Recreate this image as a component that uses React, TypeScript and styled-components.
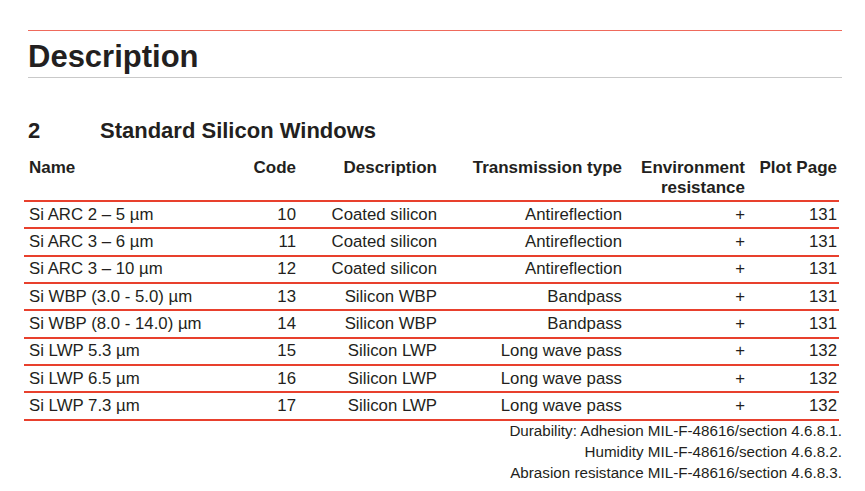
import React from "react";
import styled, { createGlobalStyle } from "styled-components";

const Global = createGlobalStyle`
  html, body { margin: 0; padding: 0; background: #ffffff; }
  body { font-family: "Liberation Sans", Arial, sans-serif; color: #231f20; }
`;

const Page = styled.div`
  width: 865px;
  height: 491px;
  padding: 30px 23px 0 28px;
  box-sizing: border-box;
  display: flex;
  flex-direction: column;
`;

const TitleBar = styled.header`
  border-top: 1px solid #ef6a5c;
  border-bottom: 1px solid #c9c9c9;
  height: 48px;
  box-sizing: border-box;
  display: flex;
  align-items: center;
`;

const Title = styled.h1`
  margin: 0;
  font-size: 31px;
  font-weight: 700;
  line-height: 1;
  position: relative;
  top: 2px;
`;

const Section = styled.h2`
  margin: 41px 0 0 0;
  font-size: 22px;
  font-weight: 700;
  line-height: 24px;
  display: flex;
`;

const SectionNum = styled.span`
  width: 72px;
`;

const Table = styled.div`
  margin: 15px 0 0 -4px;
  width: 815px;
  display: flex;
  flex-direction: column;
`;

const cols = "176px 91px 141px 185px 123px 92px";

const HeadRow = styled.div`
  display: grid;
  grid-template-columns: ${cols};
  padding: 0 0 3px 5px;
  border-bottom: 2px solid #e8402d;
  font-weight: 700;
  font-size: 17px;
  line-height: 19.5px;
`;

const Row = styled.div`
  display: grid;
  grid-template-columns: ${cols};
  padding-left: 5px;
  height: 27.35px;
  box-sizing: border-box;
  border-bottom: 2px solid #e8402d;
  font-size: 16.8px;
  align-items: center;
  line-height: 20px;
`;

const Cell = styled.div<{ $left?: boolean }>`
  text-align: ${(p) => (p.$left ? "left" : "right")};
  white-space: nowrap;
`;

const Notes = styled.div`
  display: flex;
  flex-direction: column;
  align-items: flex-end;
  font-size: 15.2px;
  line-height: 21px;
  margin-top: -1px;
`;

const rows = [
  ["Si ARC 2 – 5 µm", "10", "Coated silicon", "Antireflection", "+", "131"],
  ["Si ARC 3 – 6 µm", "11", "Coated silicon", "Antireflection", "+", "131"],
  ["Si ARC 3 – 10 µm", "12", "Coated silicon", "Antireflection", "+", "131"],
  ["Si WBP (3.0 - 5.0) µm", "13", "Silicon WBP", "Bandpass", "+", "131"],
  ["Si WBP (8.0 - 14.0) µm", "14", "Silicon WBP", "Bandpass", "+", "131"],
  ["Si LWP 5.3 µm", "15", "Silicon LWP", "Long wave pass", "+", "132"],
  ["Si LWP 6.5 µm", "16", "Silicon LWP", "Long wave pass", "+", "132"],
  ["Si LWP 7.3 µm", "17", "Silicon LWP", "Long wave pass", "+", "132"],
];

export default function App() {
  return (
    <>
      <Global />
      <Page>
        <TitleBar>
          <Title>Description</Title>
        </TitleBar>
        <Section>
          <SectionNum>2</SectionNum>
          Standard Silicon Windows
        </Section>
        <Table>
          <HeadRow>
            <Cell $left>Name</Cell>
            <Cell>Code</Cell>
            <Cell>Description</Cell>
            <Cell>Transmission type</Cell>
            <Cell>
              Environment
              <br />
              resistance
            </Cell>
            <Cell>Plot Page</Cell>
          </HeadRow>
          {rows.map((r) => (
            <Row key={r[0]}>
              {r.map((c, i) => (
                <Cell key={i} $left={i === 0}>
                  {c}
                </Cell>
              ))}
            </Row>
          ))}
        </Table>
        <Notes>
          <div>Durability: Adhesion MIL-F-48616/section 4.6.8.1.</div>
          <div>Humidity MIL-F-48616/section 4.6.8.2.</div>
          <div>Abrasion resistance MIL-F-48616/section 4.6.8.3.</div>
        </Notes>
      </Page>
    </>
  );
}
